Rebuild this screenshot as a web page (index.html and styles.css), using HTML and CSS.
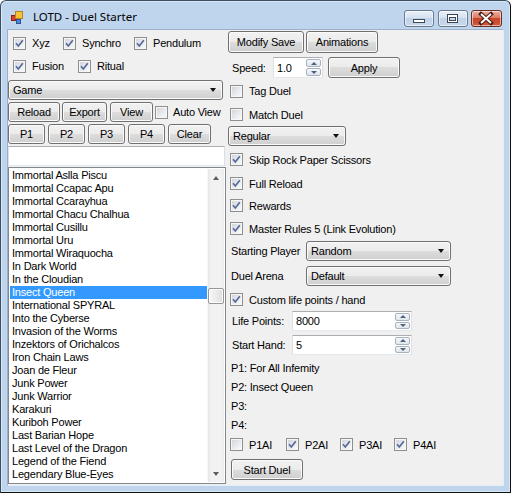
FILE: index.html
```html
<!DOCTYPE html>
<html>
<head>
<meta charset="utf-8">
<title>LOTD - Duel Starter</title>
<link rel="stylesheet" href="styles.css">
</head>
<body>
<div class="window">
  <div class="titlebar">
    <svg class="appicon" width="14" height="14" viewBox="0 0 14 14">
      <rect x="1.5" y="4.5" width="4" height="5" fill="#d8402c" stroke="#8a2216"/>
      <rect x="5.5" y="0.5" width="7" height="7" fill="#f6c236" stroke="#b7811c"/>
      <rect x="6.5" y="8.5" width="4" height="4" fill="#4d86d8" stroke="#2a5598"/>
    </svg>
    <span class="title">LOTD - Duel Starter</span>
    <div class="caps">
      <div class="cap cap-min">
        <svg width="27" height="15" viewBox="0 0 27 15"><rect x="8.5" y="8.5" width="11" height="3" fill="#fff" stroke="#3b4757"/></svg>
      </div>
      <div class="cap cap-max">
        <svg width="27" height="15" viewBox="0 0 27 15"><rect x="8.5" y="3.5" width="10" height="8" fill="#fff" stroke="#3b4757"/><rect x="10.5" y="6.5" width="6" height="3" fill="#c9d7e8" stroke="#3b4757"/></svg>
      </div>
      <div class="cap cap-close">
        <svg width="28" height="15" viewBox="0 0 28 15"><path d="M9 3 L19 12 M19 3 L9 12" stroke="#4a1a12" stroke-width="4" stroke-linecap="square"/><path d="M9 3 L19 12 M19 3 L9 12" stroke="#fff" stroke-width="2"/></svg>
      </div>
    </div>
  </div>
  <div class="client">
    <div class="leftcol">
      <div class="row r-f1">
        <label class="chk w-xyz"><span class="box"><svg viewBox="0 0 11 11"><path d="M2 5.3 L4.3 8 L8.8 2.2"/></svg></span>Xyz</label>
        <label class="chk w-synchro"><span class="box"><svg viewBox="0 0 11 11"><path d="M2 5.3 L4.3 8 L8.8 2.2"/></svg></span>Synchro</label>
        <label class="chk"><span class="box"><svg viewBox="0 0 11 11"><path d="M2 5.3 L4.3 8 L8.8 2.2"/></svg></span>Pendulum</label>
      </div>
      <div class="row r-f2">
        <label class="chk w-fusion"><span class="box"><svg viewBox="0 0 11 11"><path d="M2 5.3 L4.3 8 L8.8 2.2"/></svg></span>Fusion</label>
        <label class="chk"><span class="box"><svg viewBox="0 0 11 11"><path d="M2 5.3 L4.3 8 L8.8 2.2"/></svg></span>Ritual</label>
      </div>
      <div class="combo c-game">Game</div>
      <div class="row r-reload">
        <div class="btn b-reload">Reload</div>
        <div class="btn b-export">Export</div>
        <div class="btn b-view">View</div>
        <label class="chk c-auto"><span class="box"></span>Auto View</label>
      </div>
      <div class="row r-p">
        <div class="btn b-p">P1</div>
        <div class="btn b-p">P2</div>
        <div class="btn b-p">P3</div>
        <div class="btn b-p">P4</div>
        <div class="btn b-clear">Clear</div>
      </div>
      <div class="textbox t-search"></div>
      <div class="listbox">
        <div class="items">
          <div class="item">Immortal Aslla Piscu</div>
          <div class="item">Immortal Ccapac Apu</div>
          <div class="item">Immortal Ccarayhua</div>
          <div class="item">Immortal Chacu Chalhua</div>
          <div class="item">Immortal Cusillu</div>
          <div class="item">Immortal Uru</div>
          <div class="item">Immortal Wiraquocha</div>
          <div class="item">In Dark World</div>
          <div class="item">In the Cloudian</div>
          <div class="item selected">Insect Queen</div>
          <div class="item">International SPYRAL</div>
          <div class="item">Into the Cyberse</div>
          <div class="item">Invasion of the Worms</div>
          <div class="item">Inzektors of Orichalcos</div>
          <div class="item">Iron Chain Laws</div>
          <div class="item">Joan de Fleur</div>
          <div class="item">Junk Power</div>
          <div class="item">Junk Warrior</div>
          <div class="item">Karakuri</div>
          <div class="item">Kuriboh Power</div>
          <div class="item">Last Barian Hope</div>
          <div class="item">Last Level of the Dragon</div>
          <div class="item">Legend of the Fiend</div>
          <div class="item">Legendary Blue-Eyes</div>
          <div class="item">Legendary Dragons</div>
        </div>
        <div class="vscroll">
          <div class="sb-btn"><span class="arr-up"></span></div>
          <div class="sb-track"><div class="thumb"></div></div>
          <div class="sb-btn"><span class="arr-down"></span></div>
        </div>
      </div>
    </div>

    <div class="rightcol">
      <div class="row r-top">
        <div class="btn b-modify">Modify Save</div>
        <div class="btn b-anim">Animations</div>
      </div>
      <div class="row r-speed">
        <span class="lbl l-speed">Speed:</span>
        <div class="textbox numeric n-speed"><span class="val">1.0</span><div class="spin"><div class="sp"><span class="arr-up-s"></span></div><div class="sp"><span class="arr-down-s"></span></div></div></div>
        <div class="btn b-apply">Apply</div>
      </div>
      <div class="row r-tag"><label class="chk"><span class="box"></span>Tag Duel</label></div>
      <div class="row r-match"><label class="chk"><span class="box"></span>Match Duel</label></div>
      <div class="combo c-regular">Regular</div>
      <div class="row r-skip"><label class="chk"><span class="box"><svg viewBox="0 0 11 11"><path d="M2 5.3 L4.3 8 L8.8 2.2"/></svg></span>Skip Rock Paper Scissors</label></div>
      <div class="row r-full"><label class="chk"><span class="box"><svg viewBox="0 0 11 11"><path d="M2 5.3 L4.3 8 L8.8 2.2"/></svg></span>Full Reload</label></div>
      <div class="row r-rewards"><label class="chk"><span class="box"><svg viewBox="0 0 11 11"><path d="M2 5.3 L4.3 8 L8.8 2.2"/></svg></span>Rewards</label></div>
      <div class="row r-master"><label class="chk"><span class="box"><svg viewBox="0 0 11 11"><path d="M2 5.3 L4.3 8 L8.8 2.2"/></svg></span>Master Rules 5 (Link Evolution)</label></div>
      <div class="row r-starting">
        <span class="lbl l-combo">Starting Player</span>
        <div class="combo c-wide">Random</div>
      </div>
      <div class="row r-arena">
        <span class="lbl l-combo">Duel Arena</span>
        <div class="combo c-wide">Default</div>
      </div>
      <div class="row r-custom"><label class="chk"><span class="box"><svg viewBox="0 0 11 11"><path d="M2 5.3 L4.3 8 L8.8 2.2"/></svg></span>Custom life points / hand</label></div>
      <div class="row r-life">
        <span class="lbl l-num">Life Points:</span>
        <div class="textbox numeric n-wide"><span class="val">8000</span><div class="spin"><div class="sp"><span class="arr-up-s"></span></div><div class="sp"><span class="arr-down-s"></span></div></div></div>
      </div>
      <div class="row r-hand">
        <span class="lbl l-num">Start Hand:</span>
        <div class="textbox numeric n-wide"><span class="val">5</span><div class="spin"><div class="sp"><span class="arr-up-s"></span></div><div class="sp"><span class="arr-down-s"></span></div></div></div>
      </div>
      <div class="row r-pl r-pl-first">P1: For All Infemity</div>
      <div class="row r-pl">P2: Insect Queen</div>
      <div class="row r-pl">P3:</div>
      <div class="row r-pl">P4:</div>
      <div class="row r-ai">
        <label class="chk w-ai1"><span class="box"></span>P1AI</label>
        <label class="chk w-ai"><span class="box"><svg viewBox="0 0 11 11"><path d="M2 5.3 L4.3 8 L8.8 2.2"/></svg></span>P2AI</label>
        <label class="chk w-ai"><span class="box"><svg viewBox="0 0 11 11"><path d="M2 5.3 L4.3 8 L8.8 2.2"/></svg></span>P3AI</label>
        <label class="chk"><span class="box"><svg viewBox="0 0 11 11"><path d="M2 5.3 L4.3 8 L8.8 2.2"/></svg></span>P4AI</label>
      </div>
      <div class="row r-start">
        <div class="btn b-start">Start Duel</div>
      </div>
    </div>
  </div>
</div>
</body>
</html>
```

FILE: styles.css
```css
* { box-sizing: border-box; }
html, body { margin: 0; padding: 0; }
body {
  width: 511px;
  height: 493px;
  overflow: hidden;
  background: #ffffff;
  font-family: "Liberation Sans", Arial, sans-serif;
  font-size: 11px;
  letter-spacing: -0.2px;
  color: #000;
}

/* ---------- window frame ---------- */
.window {
  width: 511px;
  height: 493px;
  background: #bfd5ee;
  border: 1px solid #3c4d61;
  border-right-color: #101010;
  border-bottom-color: #101010;
  border-radius: 6px 6px 0 0;
  padding: 0 6px 6px 6px;
  display: flex;
  flex-direction: column;
  box-shadow: inset 0 0 0 1px #d9e8f7;
}
.titlebar {
  height: 28px;
  display: flex;
  align-items: flex-start;
  flex: none;
}
.appicon { margin: 10px 0 0 3px; flex: none; }
.title {
  font-family: "Noto Sans", "Open Sans", sans-serif;
  font-size: 11.5px;
  letter-spacing: 0;
  margin: 8px 0 0 9px;
  line-height: 16px;
  color: #000;
}
.caps { margin-left: auto; margin-right: 2px; display: flex; margin-top: 9px; }
.cap {
  height: 17px;
  border: 1px solid #6a7b91;
  border-radius: 3px;
  display: flex;
  box-shadow: inset 0 0 0 1px rgba(255,255,255,0.55);
}
.cap-min, .cap-max {
  width: 30px;
  background: linear-gradient(#e9f0f8 0%, #d6e2f0 45%, #c2d3e7 50%, #c9d9ec 100%);
}
.cap-max { margin-left: 4px; }
.cap-close {
  width: 31px;
  margin-left: 3px;
  border-color: #6e2d22;
  background: linear-gradient(#eab2a2 0%, #dd7c64 45%, #c8452a 50%, #cf5a3c 100%);
}

/* ---------- client ---------- */
.client {
  flex: 1;
  background: #f0f0f0;
  border: 1px solid #9db1c9;
  border-right-color: #e4edf8;
  border-bottom-color: #e4edf8;
  display: flex;
}
.leftcol { width: 218px; display: flex; flex-direction: column; flex: none; }
.rightcol { margin-left: 2px; display: flex; flex-direction: column; flex: 1; }
.row { display: flex; align-items: center; flex: none; }

/* ---------- checkbox ---------- */
.chk { display: flex; align-items: center; white-space: nowrap; }
.box {
  width: 13px;
  height: 13px;
  border: 1px solid #8e8f8f;
  background: linear-gradient(135deg, #cdd1d8 0%, #e9ebee 55%, #fbfbfb 100%);
  box-shadow: inset 0 0 0 1px #f6f6f6;
  margin-right: 6px;
  display: flex;
  flex: none;
}
.box svg { width: 11px; height: 11px; }
.box svg path { fill: none; stroke: #56699a; stroke-width: 1.7; }

/* ---------- buttons ---------- */
.btn {
  border: 1px solid #707070;
  border-radius: 3px;
  background: linear-gradient(#f2f2f2 0%, #ebebeb 50%, #dddddd 50%, #cfcfcf 100%);
  box-shadow: inset 0 0 0 1px #fbfbfb;
  display: flex;
  align-items: center;
  justify-content: center;
  white-space: nowrap;
  flex: none;
}

/* ---------- combo ---------- */
.combo {
  border: 1px solid #707070;
  border-radius: 3px;
  background: linear-gradient(#f2f2f2 0%, #ebebeb 50%, #dddddd 50%, #cfcfcf 100%);
  box-shadow: inset 0 0 0 1px #fbfbfb;
  display: flex;
  align-items: center;
  padding-left: 4px;
  flex: none;
}
.combo::after {
  content: "";
  margin-left: auto;
  margin-right: 6px;
  border-left: 3.5px solid transparent;
  border-right: 3.5px solid transparent;
  border-top: 4px solid #111;
}

/* ---------- textbox ---------- */
.textbox {
  background: #fff;
  border: 1px solid #abadb3;
  border-left-color: #dbdfe6;
  border-right-color: #dbdfe6;
  border-bottom-color: #e3e9ef;
  flex: none;
}
.numeric { display: flex; align-items: center; padding: 1px 1px 1px 3px; }
.numeric .val { flex: 1; }
.spin { width: 15px; height: 100%; display: flex; flex-direction: column; gap: 1px; }
.sp {
  flex: 1;
  border: 1px solid #a9b3c0;
  border-radius: 2px;
  background: linear-gradient(#f5f7fa, #dfe5ec);
  display: flex;
  align-items: center;
  justify-content: center;
}
.arr-up-s { border-left: 3px solid transparent; border-right: 3px solid transparent; border-bottom: 3px solid #4d6080; }
.arr-down-s { border-left: 3px solid transparent; border-right: 3px solid transparent; border-top: 3px solid #4d6080; }

/* ---------- left column sizes ---------- */
.r-f1 { margin-top: 2px; height: 22px; padding-left: 5px; }
.r-f2 { margin-top: 1px; height: 22px; padding-left: 5px; }
.w-xyz { width: 50px; }
.w-synchro { width: 71px; }
.w-fusion { width: 65px; }
.c-game { margin-top: 3px; height: 20px; width: 215px; }
.r-reload { margin-top: 2px; height: 20px; }
.r-reload .btn { height: 20px; }
.b-reload { width: 52px; }
.b-export { width: 45px; margin-left: 2px; }
.b-view { width: 43px; margin-left: 3px; }
.c-auto { margin-left: 2px; }
.c-auto .box { margin-right: 5px; }
.r-p { margin-top: 2px; height: 20px; gap: 3px; }
.r-p .btn { height: 20px; }
.b-p { width: 37px; }
.b-clear { width: 43px; }
.t-search { margin-top: 2px; height: 20px; width: 217px; }
.listbox {
  margin-top: 1px;
  height: 317px;
  width: 218px;
  background: #fff;
  border: 1px solid #828790;
  padding: 1px;
  display: flex;
  overflow: hidden;
}
.items { flex: 1; overflow: hidden; }
.item { height: 13px; line-height: 13px; padding-left: 2px; white-space: nowrap; }
.item.selected { background: #3399ff; color: #fff; }
.vscroll {
  width: 17px;
  display: flex;
  flex-direction: column;
  background: linear-gradient(to right, #e6e6e6 0%, #f2f2f2 20%, #f2f2f2 80%, #ebebeb 100%);
  border-left: 1px solid #f8f8f8;
}
.sb-btn { height: 17px; display: flex; align-items: center; justify-content: center; flex: none; }
.arr-up { border-left: 3.5px solid transparent; border-right: 3.5px solid transparent; border-bottom: 4px solid #606060; }
.arr-down { border-left: 3.5px solid transparent; border-right: 3.5px solid transparent; border-top: 4px solid #606060; }
.sb-track { flex: 1; }
.thumb {
  margin-top: 102px;
  margin-left: 0px;
  width: 16px;
  height: 16px;
  border: 1px solid #979797;
  border-radius: 2px;
  background: linear-gradient(to right, #f7f7f7 0%, #ececec 50%, #dcdcdc 100%);
  box-shadow: inset 0 0 0 1px #fdfdfd;
}

/* ---------- right column sizes ---------- */
.r-top { margin-top: 1px; height: 22px; }
.r-top .btn { height: 22px; }
.b-modify { width: 76px; }
.b-anim { width: 72px; margin-left: 2px; }
.r-speed { margin-top: 4px; height: 21px; padding-left: 4px; }
.l-speed { width: 41px; }
.n-speed { width: 50px; height: 21px; }
.b-apply { width: 72px; height: 21px; margin-left: 5px; }
.r-tag { margin-top: 2px; height: 22px; padding-left: 2px; }
.r-match { margin-top: 2px; height: 21px; padding-left: 2px; }
.c-regular { margin-top: 1px; height: 20px; width: 118px; }
.r-skip { margin-top: 3px; height: 21px; padding-left: 2px; }
.r-full { margin-top: 3px; height: 21px; padding-left: 2px; }
.r-rewards { margin-top: 1px; height: 21px; padding-left: 2px; }
.r-master { margin-top: 2px; height: 21px; padding-left: 2px; }
.r-starting { margin-top: 2px; height: 20px; }
.r-arena { margin-top: 5px; height: 20px; }
.l-combo { width: 78px; padding-left: 3px; white-space: nowrap; }
.c-wide { width: 145px; height: 20px; }
.r-custom { margin-top: 3px; height: 21px; padding-left: 2px; }
.r-life { margin-top: 1px; height: 20px; }
.r-hand { margin-top: 4px; height: 20px; }
.l-num { width: 64px; padding-left: 4px; white-space: nowrap; }
.n-wide { width: 120px; height: 20px; }
.r-pl { height: 19px; padding-left: 3px; }
.r-pl-first { margin-top: 3px; }
.r-ai { height: 21px; padding-left: 2px; }
.w-ai1 { width: 56px; }
.w-ai { width: 54px; }
.r-start { margin-top: 4px; height: 21px; padding-left: 3px; }
.b-start { width: 72px; height: 21px; }
```
